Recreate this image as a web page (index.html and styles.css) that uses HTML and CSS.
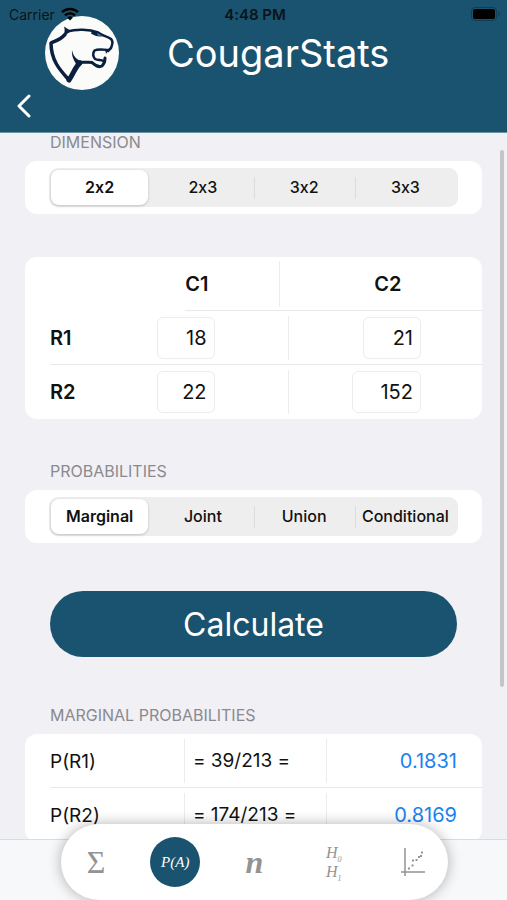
FILE: index.html
```html
<!doctype html>
<html lang="en">

<head>
	<meta charset="UTF-8">
	<meta name="viewport" content="width=device-width, initial-scale=1.0">
	<title>CougarStats</title>
	<link rel="stylesheet" href="styles.css">
</head>

<body>

	<!-- header -->
	<header class="header">
		<div class="status">
			<div class="status-left">
				<span>Carrier</span>
				<svg class="wifi" viewBox="0 0 18 14" fill="none" stroke="#000" stroke-width="2.4">
					<path d="M1 5.2a11.5 11.5 0 0 1 16 0M4 8.4a7.2 7.2 0 0 1 10 0" />
					<path d="M9 13.5L6.2 10.7a4 4 0 0 1 5.6 0z" fill="#000" stroke="none" />
				</svg>
			</div>
			<div class="status-time">4:48 PM</div>
			<div class="status-right">
				<svg class="battery" viewBox="0 0 30 14">
					<rect x="0.5" y="0.5" width="25" height="13" rx="3.5" fill="none" stroke="#103f54" />
					<rect x="2" y="2" width="22" height="10" rx="2" fill="#000" />
					<path d="M27.3 4.5c2 .8 2 4.2 0 5z" fill="#103f54" />
				</svg>
			</div>
		</div>
		<div class="brand">
			<svg class="logo" viewBox="0 0 74 74">
				<circle cx="37" cy="37" r="37" fill="#fbfbfa" />
				<g fill="none" stroke="#0b1f3f" stroke-linejoin="round" stroke-linecap="round">
					<!-- back and neck -->
					<path d="M24 64C17 56 6 46 6 27c4-2 9-3 14-8.500" stroke-width="3.500" />
					<!-- forehead and nose -->
					<path d="M22 15.500c9-2.500 22-2.500 31 1 3 3 9 3.500 13 6.500 3 3 1 6 0 9l-3 3" stroke-width="2.500" />
					<!-- mouth -->
					<path d="M63 34c-4-.5-10-1.500-13.500.5-2 3-1.500 6 .5 8.500 3 1.500 6 .5 8.500 2" stroke-width="2.500" />
					<path d="M60 42c0 3-1 6-3 8-4 2-7-1-10-3.500-4-1-8 .5-12-.5" stroke-width="3" />
					<path d="M35 47c-5 4-6 10-11 17" stroke-width="5" />
				</g>
				<g fill="#0b1f3f">
					<path d="M19 10.500l7 4.500-4 3-4 1.500c2-3 2-6 1-9z" />
					<path d="M27 34c1 5 3 8 8 11l2 3-5 3c0-4-6-8-5-17z" />
					<path d="M47 15c5 0 10 1.500 12 5-5 1-9 0-13-2.500z" />
					<path d="M60 33h4l-3 5zM58 46l2-6 1 7z" />
				</g>
				<path d="M52 17l5 2.500-4 .2z" fill="#2f8fd0" />
			</svg>
			<h1 class="brand-name">CougarStats</h1>
		</div>
		<button class="back" type="button" aria-label="Back">
			<svg viewBox="0 0 14 24" fill="none" stroke="#fff" stroke-width="3" stroke-linecap="round" stroke-linejoin="round">
				<path d="M12 2L2 12l10 10" />
			</svg>
		</button>
	</header>

	<!-- form -->
	<main class="content">
		<form class="form">
			<h2 class="label">DIMENSION</h2>
			<div class="card card-seg">
				<div class="seg">
					<label class="seg-item"><input type="radio" name="dimension" checked><span>2x2</span></label>
					<label class="seg-item"><input type="radio" name="dimension"><span>2x3</span></label>
					<label class="seg-item"><input type="radio" name="dimension"><span>3x2</span></label>
					<label class="seg-item"><input type="radio" name="dimension"><span>3x3</span></label>
				</div>
			</div>

			<table class="card matrix">
				<thead>
					<tr>
						<td class="corner"></td>
						<th class="col-first" scope="col">C1</th>
						<th class="col-last" scope="col">C2</th>
					</tr>
				</thead>
				<tbody>
					<tr>
						<th scope="row">R1</th>
						<td class="cell-first"><input class="num" type="text" inputmode="numeric" aria-label="R1 C1" value="18"></td>
						<td class="cell-last"><input class="num" type="text" inputmode="numeric" aria-label="R1 C2" value="21"></td>
					</tr>
					<tr>
						<th scope="row">R2</th>
						<td class="cell-first"><input class="num" type="text" inputmode="numeric" aria-label="R2 C1" value="22"></td>
						<td class="cell-last"><input class="num num-wide" type="text" inputmode="numeric" aria-label="R2 C2" value="152"></td>
					</tr>
				</tbody>
			</table>

			<h2 class="label">PROBABILITIES</h2>
			<div class="card card-seg">
				<div class="seg">
					<label class="seg-item"><input type="radio" name="probability" checked><span>Marginal</span></label>
					<label class="seg-item"><input type="radio" name="probability"><span>Joint</span></label>
					<label class="seg-item"><input type="radio" name="probability"><span>Union</span></label>
					<label class="seg-item"><input type="radio" name="probability"><span>Conditional</span></label>
				</div>
			</div>

			<button class="calculate" type="button">Calculate</button>

			<h2 class="label">MARGINAL PROBABILITIES</h2>
			<table class="card results">
				<tbody>
					<tr>
						<th scope="row">P(R1)</th>
						<td class="formula">= 39/213 =</td>
						<td class="value">0.1831</td>
					</tr>
					<tr>
						<th scope="row">P(R2)</th>
						<td class="formula">= 174/213 =</td>
						<td class="value">0.8169</td>
					</tr>
				</tbody>
			</table>
		</form>
		<div class="scrollbar"></div>
	</main>

	<!-- tab bar -->
	<footer class="footer">
		<nav class="tabs">
			<a class="tab tab-sigma" href="#">Σ</a>
			<a class="tab tab-on" href="#">P(A)</a>
			<a class="tab tab-n" href="#">n</a>
			<a class="tab tab-h" href="#"><span>H<sub>0</sub></span><span>H<sub>1</sub></span></a>
			<a class="tab" href="#" aria-label="Regression">
				<svg class="plot" viewBox="0 0 24 28" fill="none" stroke="#939393" stroke-width="1.500">
					<path d="M4 0v28M0 24h24" />
					<path d="M7 20.500h2M10.500 17.500h2M11 12.500h2M14.500 12h2M17 9h2M19 8h2M20 4.500h2" stroke-width="2" />
				</svg>
			</a>
		</nav>
	</footer>

</body>

</html>
```
FILE: styles.css
```css
* {
	box-sizing: border-box;
}

body {
	margin: 0;
	height: 100vh;
	display: flex;
	flex-direction: column;
	overflow: hidden;
	background: #f1f0f5;
	color: #111;
	font-family: Inter, "Liberation Sans", sans-serif;
	font-size: 20px;
	font-variant-ligatures: no-contextual;
}

button,
input {
	font: inherit;
}

/* header */
.header {
	position: relative;
	flex: none;
	padding-top: 16px;
	background: #1a536f;
	border-bottom: 1px solid #6d8fa2;
}

/* lies over the logo */
.status {
	position: absolute;
	top: 4px;
	left: 0;
	right: 0;
	z-index: 1;
	display: flex;
	align-items: center;
	padding: 0 6px 0 9px;
	height: 20px;
	font-size: 14px;
	color: #0a1418;
}

.status-left,
.status-right {
	flex: 1;
	display: flex;
	align-items: center;
	gap: 6px;
}

.status-right {
	justify-content: flex-end;
}

.status-time {
	font-size: 15px;
	font-weight: 600;
}

.wifi {
	width: 18px;
	height: 14px;
}

.battery {
	width: 30px;
	height: 14px;
}

.brand {
	display: flex;
	align-items: center;
	gap: 48px;
	padding-left: 45px;
}

.logo {
	width: 74px;
	height: 74px;
}

.brand-name {
	margin: 0;
	color: #fff;
	font-size: 38px;
	font-weight: 400;
}

.back {
	display: block;
	margin: 0 0 10px 12px;
	padding: 4px;
	height: 32px;
	border: 0;
	background: none;
}

.back svg {
	display: block;
	width: 16px;
	height: 24px;
}

/* content */
.content {
	position: relative;
	flex: 1;
	min-height: 0;
	overflow: hidden;
}

.form {
	padding: 0 25px;
}

.label {
	margin: 0;
	padding: 0 25px 10px;
	color: #8a8a8f;
	font-size: 16px;
	line-height: 18px;
	font-weight: 400;
}

.card {
	width: 100%;
	margin-bottom: 43px;
	background: #fff;
	border-radius: 12px;
}

.card-seg {
	padding: 7px 24px;
}

.seg {
	display: flex;
	padding: 2px;
	border-radius: 9px;
	background: #eee;
}

.seg-item {
	position: relative;
	flex: 1;
	font-size: 16px;
	font-weight: 500;
	text-align: center;
}

.seg-item input {
	position: absolute;
	opacity: 0;
}

.seg-item span {
	display: block;
	line-height: 35px;
	border-radius: 8px;
}

.seg-item:nth-child(n+3)::before {
	content: "";
	position: absolute;
	left: 0;
	top: 7px;
	height: 22px;
	border-left: 1px solid #dcdcdd;
}

.seg-item input:checked+span {
	margin-right: 4px;
	background: #fff;
	box-shadow: 0 1px 3px rgba(0, 0, 0, .2);
	font-weight: 600;
}

/* tables */
.matrix,
.matrix thead,
.matrix tbody,
.results,
.results tbody {
	display: block;
}

.matrix tr,
.results tr {
	position: relative;
	display: flex;
	align-items: center;
	height: 54px;
	padding-left: 25px;
}

.matrix tr::after,
.results tr::after {
	content: "";
	position: absolute;
	left: 25px;
	right: 0;
	bottom: 0;
	border-bottom: 1px solid #e9e9ea;
}

.matrix thead tr::after {
	left: 35%;
}

.matrix tbody tr:last-child::after {
	display: none;
}

.matrix th,
.matrix td,
.results th,
.results td {
	padding: 0;
	text-align: left;
}

.matrix th {
	font-weight: 600;
}

.corner {
	width: 15%;
}

.matrix .col-first {
	width: 38%;
	line-height: 46px;
	text-align: center;
}

.matrix .col-last {
	width: 47%;
	padding-left: 14px;
	border-left: 1px solid #ececed;
	line-height: 46px;
	text-align: center;
}

.matrix tbody th {
	width: 10%;
}

.matrix .cell-first,
.matrix .cell-last {
	display: flex;
	justify-content: flex-end;
	align-items: center;
	width: 45%;
	height: 44px;
}

.matrix .cell-first {
	padding-right: 73px;
}

.matrix .cell-last {
	padding-right: 61px;
	border-left: 1px solid #ececed;
}

.num {
	width: 58px;
	height: 42px;
	padding: 0 7px;
	border: 1px solid #ececed;
	border-radius: 6px;
	background: #fff;
	color: #111;
	text-align: right;
}

.num-wide {
	width: 69px;
}

/* button */
.calculate {
	display: block;
	width: calc(100% - 50px);
	height: 66px;
	margin: 48px 25px 49px;
	border: 0;
	border-radius: 33px;
	background: #1a536f;
	color: #fff;
	font-size: 32px;
}

/* results */
.results th {
	width: 31%;
	font-size: 19px;
	font-weight: 400;
}

.results td {
	line-height: 44px;
	border-left: 1px solid #ececed;
}

.results .formula {
	width: 33%;
	padding-left: 8px;
	font-size: 19px;
}

.results .value {
	width: 36%;
	padding-right: 25px;
	color: #1a82f0;
	text-align: right;
}

.scrollbar {
	position: absolute;
	top: 17px;
	right: 3px;
	width: 4px;
	height: 537px;
	border-radius: 2px;
	background: #c5c4c9;
}

/* tab bar */
.footer {
	position: relative;
	flex: none;
	height: 61px;
	padding: 0 59px 0 61px;
	border-top: 1px solid #dcdcdf;
	background: #f7f8f9;
}

.tabs {
	display: flex;
	align-items: center;
	justify-content: space-between;
	height: 76px;
	margin-top: -16px;
	padding: 0 10px;
	border-radius: 38px;
	background: #fff;
	box-shadow: 0 0 14px rgba(0, 0, 0, .3);
}

.tab {
	display: flex;
	align-items: center;
	justify-content: center;
	width: 50px;
	height: 50px;
	border-radius: 50%;
	color: #939393;
	font-family: "Liberation Serif", serif;
	text-decoration: none;
}

.tab-sigma {
	font-size: 32px;
}

.tab-on {
	background: #1a536f;
	color: #fff;
	font-size: 15px;
	font-style: italic;
}

.tab-n {
	font-size: 32px;
	font-style: italic;
	font-weight: 700;
}

.tab-h {
	flex-direction: column;
	font-size: 16px;
	line-height: 19px;
	font-style: italic;
}

.tab-h sub {
	font-size: 8px;
	line-height: 0;
}

.plot {
	width: 24px;
	height: 28px;
}
```
